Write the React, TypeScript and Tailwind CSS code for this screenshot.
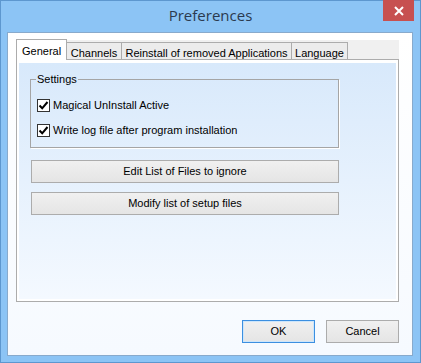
import React from 'react';

const font = { fontFamily: '"Liberation Sans", Arial, sans-serif' };

const Check: React.FC<{ label: string }> = ({ label }) => (
  <label className="flex items-center h-[13px] gap-[3px] text-[11px] text-black">
    <span className="w-[13px] h-[13px] border border-[#333] bg-white flex items-center justify-center">
      <svg width="11" height="11" viewBox="0 0 11 11">
        <path d="M1.5 5.5 L4.2 8.3 L9.5 2" fill="none" stroke="#000" strokeWidth="2" />
      </svg>
    </span>
    <span>{label}</span>
  </label>
);

const Btn: React.FC<{ label: string; w: string; primary?: boolean }> = ({ label, w, primary }) => (
  <button
    className={`${w} h-[23px] text-[11px] text-black bg-gradient-to-b from-[#f0f0f0] to-[#e5e5e5] border ${
      primary ? 'border-[#3c8fe0] shadow-[inset_0_0_0_1px_#cde6fb]' : 'border-[#acacac]'
    }`}
  >
    {label}
  </button>
);

export default function App() {
  return (
    <div
      className="w-[421px] h-[363px] bg-[#8cc4f5] border border-[#5d97cf] flex flex-col"
      style={font}
    >
      {/* title bar */}
      <div className="relative h-[31px] flex items-center justify-center">
        <span
          className="text-[15px] text-[#2b3a4f] -mt-[2px]"
          style={{ fontFamily: '"Open Sans", "Noto Sans", sans-serif' }}
        >
          Preferences
        </span>
        <div className="absolute top-[-1px] right-[6px] w-[31px] h-[21px] bg-[#c75050] flex items-center justify-center">
          <svg width="10" height="10" viewBox="0 0 10 10">
            <path d="M1 1 L9 9 M9 1 L1 9" stroke="#fff" strokeWidth="2" />
          </svg>
        </div>
      </div>

      {/* client */}
      <div className="ml-[6px] w-[406px] h-[324px] border border-[#88aacc] bg-gradient-to-b from-white to-[#f6faff] flex flex-col pl-[8px] pt-[6px]">
        {/* tab control */}
        <div className="w-[383px] flex flex-col">
          <div className="relative h-[20px] flex items-end">
            <div className="absolute left-0 right-0 top-[1px] bottom-0 bg-[#f0f0f0]" />
            <div className="relative z-10 h-[21px] -mb-[1px] w-[51px] bg-white border border-b-0 border-[#acacac] text-[11px] pl-[5px] pt-[3px]">
              General
            </div>
            <div className="relative h-[17px] w-[55px] bg-[#ececec] border border-l-0 border-b-0 border-[#acacac] text-[11px] text-center pt-[2px]">
              Channels
            </div>
            <div className="relative h-[17px] w-[170px] bg-[#ececec] border border-l-0 border-b-0 border-[#acacac] text-[11px] text-center pt-[2px]">
              Reinstall of removed Applications
            </div>
            <div className="relative h-[17px] w-[56px] bg-[#ececec] border border-l-0 border-b-0 border-[#acacac] text-[11px] text-center pt-[2px]">
              Language
            </div>
          </div>
          <div className="h-[243px] border border-[#acacac] bg-white p-[2px] pt-[3px]">
            <div className="h-full bg-gradient-to-b from-[#d8e9fb] to-[#f4f9ff] pl-[11px] pt-[9px]">
              <div className="relative w-[309px] h-[69px] mt-[7px] border border-[#a5a5a5] shadow-[1px_1px_0_#fff] pl-[6px] pt-[19px] flex flex-col gap-[12px]">
                <span className="absolute left-[5px] -top-[8px] text-[11px] bg-[#d9eafb] px-[1px] leading-[14px]">
                  Settings
                </span>
                <Check label="Magical UnInstall Active" />
                <Check label="Write log file after program installation" />
              </div>
              <div className="flex flex-col gap-[9px] mt-[12px] ml-[1px]">
                <Btn label="Edit List of Files to ignore" w="w-[308px]" />
                <Btn label="Modify list of setup files" w="w-[308px]" />
              </div>
            </div>
          </div>
        </div>
        {/* footer */}
        <div className="flex justify-end gap-[11px] mt-[18px] pr-[13px]">
          <Btn label="OK" w="w-[73px]" primary />
          <Btn label="Cancel" w="w-[73px]" />
        </div>
      </div>
    </div>
  );
}
